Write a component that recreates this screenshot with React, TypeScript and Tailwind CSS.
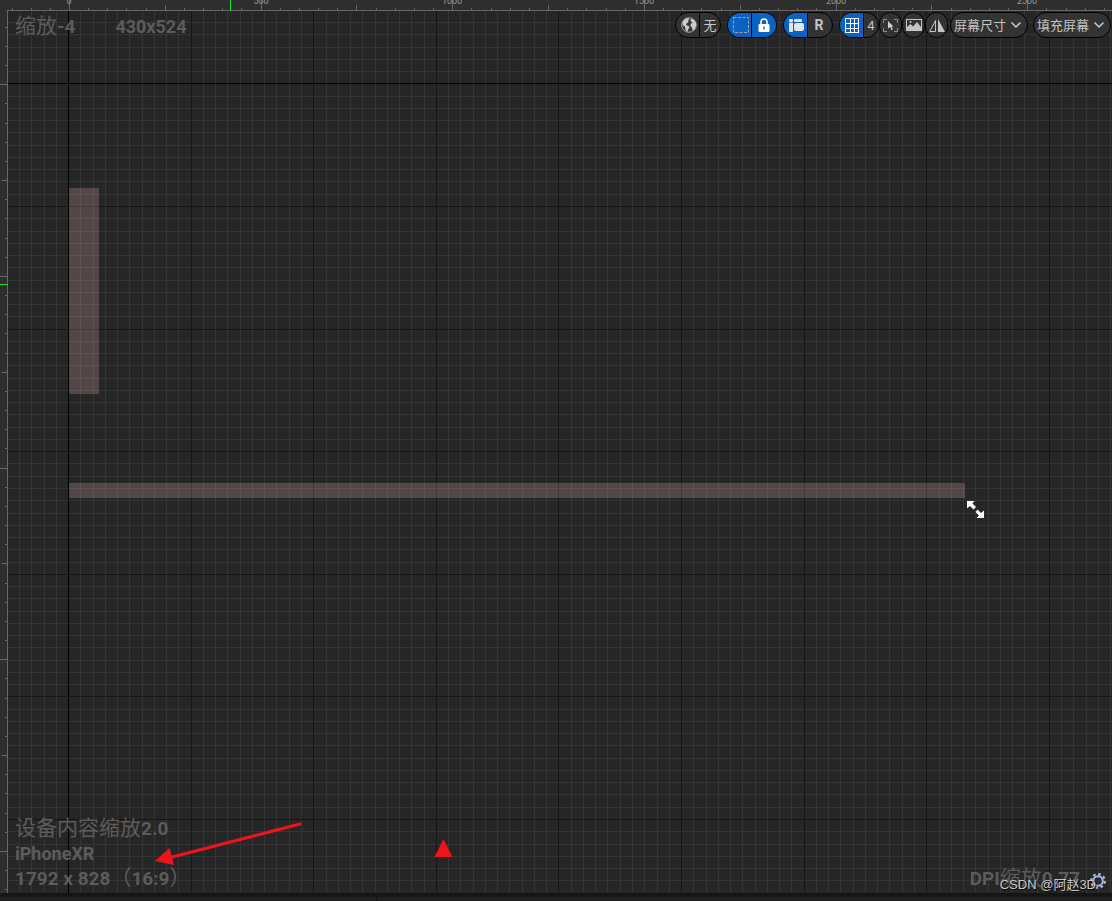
import type { ReactNode } from 'react';
import { ChevronDown } from 'lucide-react';

const UNIT = 0.3833; // pixels per slate unit
const GRID = 12.26;

const range = (from: number, to: number) => Array.from({ length: to - from + 1 }, (_, i) => from + i);

// Canvas coordinates start after the 8px left ruler and the 11px top ruler
const columns = range(-4, 200).map((i) => ({ i, pos: Math.round(68.05 + i * GRID) - 8 }));
const rows = range(-5, 150).map((i) => ({ i, pos: Math.round(83.4 + i * GRID) - 11 }));

const lineColor = (i: number) => (i === 0 ? '#000000' : i % 10 === 0 ? '#161616' : '#353535');
const byWeight = (a: { i: number }, b: { i: number }) => Number(a.i % 10 === 0) - Number(b.i % 10 === 0);

const tickSize = (i: number, full: number) => (i % 10 === 0 ? full : i % 5 === 0 ? 5 : 2);

function TopRuler() {
  return (
    <svg className="block h-[11px] w-full shrink-0 bg-[#2e2e2e]" shapeRendering="crispEdges">
      {range(-3, 130).map((i) => {
        const size = tickSize(i, 10);
        return <rect key={i} x={Math.round(69 + i * 50 * UNIT)} y={10 - size} width="1" height={size} fill="#686868" />;
      })}
      <rect x="7" y="10" width="100%" height="1" fill="#686868" />
      {range(0, 12).map((i) => (
        <text
          key={i}
          x={Math.round(69 + i * 500 * UNIT)}
          y="4"
          textAnchor="middle"
          className="fill-[#999999] font-['Roboto',sans-serif] text-[9px]"
        >
          {i * 500}
        </text>
      ))}
      <rect x="230" y="0" width="1" height="11" fill="#19e619" />
    </svg>
  );
}

function LeftRuler() {
  return (
    <div className="relative w-2 shrink-0 bg-[#2e2e2e]">
      <svg className="absolute inset-0 h-full w-full" shapeRendering="crispEdges">
        {range(-3, 90).map((i) => {
          const size = tickSize(i, 7);
          return <rect key={i} x={7 - size} y={Math.round(73.3 + i * 50 * UNIT)} width={size} height="1" fill="#686868" />;
        })}
        <rect x="7" y="0" width="1" height="100%" fill="#686868" />
        <rect x="0" y="273" width="8" height="1" fill="#19e619" />
      </svg>
    </div>
  );
}

function DesignCanvas() {
  return (
    <svg className="absolute inset-0 h-full w-full">
      <g shapeRendering="crispEdges">
        {[...columns.map((c) => ({ ...c, vertical: true })), ...rows.map((r) => ({ ...r, vertical: false }))]
          .sort(byWeight)
          .map(({ i, pos, vertical }) => (
            <rect
              key={`${vertical ? 'v' : 'h'}${i}`}
              x={vertical ? pos : 0}
              y={vertical ? 0 : pos}
              width={vertical ? 1 : '100%'}
              height={vertical ? '100%' : 1}
              fill={lineColor(i)}
            />
          ))}
        <rect x="61" y="177" width="30" height="206" fill="#f8c2c2" fillOpacity="0.21" />
        <rect x="61" y="472" width="896" height="15" fill="#f8c2c2" fillOpacity="0.21" />
      </g>

      {/* resize cursor */}
      <g transform="translate(959 490)" fill="#ffffff">
        <path d="M0 0h7.500L5.500 2.500 9 6 6.500 8.500 3 5 0 7.500z" />
        <path d="M17 17H9.500l2.500-2.500-3.500-3.500 2-2.500 3.500 3.500L17 9.500z" />
      </g>

      <path d="M292 813 164 846" stroke="#ed141c" strokeWidth="3" strokeLinecap="round" />
      <path d="m147 850 14.500-13 4.500 17z" fill="#ed141c" />
      <path d="m435.500 828 9 18h-18z" fill="#ed141c" />
    </svg>
  );
}

function Group({ children }: { children: ReactNode }) {
  return (
    <div className="flex h-[26px] divide-x divide-black overflow-hidden rounded-full border border-black bg-[#333333]">
      {children}
    </div>
  );
}

function ToolButton({ label, active, narrow, children }: { label: string; active?: boolean; narrow?: boolean; children: ReactNode }) {
  return (
    <button
      type="button"
      aria-label={label}
      className={`flex items-center justify-center ${narrow ? 'w-[14px]' : 'w-6'} ${active ? 'bg-[#0a62c2]' : ''}`}
    >
      {children}
    </button>
  );
}

function RoundButton({ label, children }: { label: string; children: ReactNode }) {
  return (
    <button
      type="button"
      aria-label={label}
      className="flex h-[26px] w-[23px] items-center justify-center rounded-full border border-black bg-[#333333]"
    >
      {children}
    </button>
  );
}

function Dropdown({ label, value }: { label: string; value: string }) {
  return (
    <div className="relative">
      <select
        aria-label={label}
        defaultValue={value}
        className="block h-[26px] w-[78px] appearance-none rounded-full border border-black bg-[#333333] pb-1 pl-[3px] text-[13px] text-[#c4c4c4]"
      >
        <option>{value}</option>
      </select>
      <ChevronDown className="pointer-events-none absolute top-[5px] right-1 size-4 text-[#c4c4c4]" strokeWidth={2.5} />
    </div>
  );
}

function Toolbar() {
  return (
    <div className="absolute top-px right-px flex items-center gap-[6px] font-['Roboto','Noto_Sans_CJK_SC',sans-serif] text-[13px] font-normal text-[#c4c4c4]">
      <Group>
        <ToolButton label="本地化">
          <svg viewBox="0 0 16 16" className="ml-[2px] size-4">
            <circle cx="8" cy="8" r="7.300" fill="#3a3a3a" stroke="#a0a0a0" />
            <path
              d="M1.500 5 4 2l3-1 1.500 1.500-1.500 1L7.500 5 5.500 6.500 5 8l2.500 1 1 1.500L7 12.500 6.500 15 4.500 13 4 9.500 1.500 8zM10 1.500l3 1.500 2 3v3l-1.500 3.500-2 1-.500-3-1.500-1.500.500-2.500 2-.500L10.500 5 9.500 3.500z"
              fill="#cccccc"
            />
          </svg>
        </ToolButton>
        <button type="button" className="w-5 pb-[2px]">无</button>
      </Group>
      <Group>
        <ToolButton label="显示轮廓" active>
          <svg viewBox="0 0 16 16" className="ml-[2px] size-4">
            <rect x="0.500" y="0.500" width="15" height="15" fill="none" stroke="#a4a09c" strokeDasharray="3 1.500" />
          </svg>
        </ToolButton>
        <ToolButton label="遵循锁定" active>
          <svg viewBox="0 0 12 14" className="h-[14px] w-3">
            <path d="M3 7V4a3 3 0 0 1 6 0v3" fill="none" stroke="#ffffff" strokeWidth="1.600" />
            <rect x="0.500" y="6" width="11" height="8" rx="1" fill="#ffffff" />
            <path d="M6 8.500v3" stroke="#0a62c2" strokeWidth="1.400" />
          </svg>
        </ToolButton>
      </Group>
      <Group>
        <ToolButton label="布局变换" active>
          <svg viewBox="0 0 15 13" className="ml-[2px] h-[13px] w-[15px]" fill="#e4e4e4">
            <rect x="0" y="0" width="4" height="3" rx="1" />
            <rect x="0" y="3.500" width="4" height="9.500" rx="1" />
            <rect x="5" y="0" width="8" height="3" rx="1" />
            <rect x="5" y="4" width="10" height="8" rx="2" />
          </svg>
        </ToolButton>
        <button type="button" className="w-6 pr-[2px] text-sm font-bold">R</button>
      </Group>
      <div className="flex">
        <Group>
          <ToolButton label="网格对齐" active>
            <svg viewBox="0 0 14 15" className="h-[15px] w-[14px]" fill="none" stroke="#ffffff" shapeRendering="crispEdges">
              <path d="M.5.500h13v14H.5zM5 0v15M9 0v15M0 5h14M0 10h14" />
            </svg>
          </ToolButton>
          <ToolButton label="网格大小" narrow>4</ToolButton>
        </Group>
        <RoundButton label="缩放到适合">
          <svg viewBox="0 0 15 13" className="h-[13px] w-[15px] shrink-0">
            <path d="M.5 4V.5H4M11 .5h3.500V4M.5 9v3.500H4M11 12.500h3.500V9" fill="none" stroke="#8c8c8c" />
            <path d="m5 2 5.500 5.500H8.500l1.500 3-1.500.500-1.300-3L5 9.500z" fill="#d0d0d0" />
          </svg>
        </RoundButton>
        <RoundButton label="预览背景">
          <svg viewBox="0 0 16 12" className="h-3 w-4 shrink-0">
            <rect x="0.500" y="0.500" width="15" height="11" fill="none" stroke="#c4c4c4" />
            <path d="M1 11V8l3.500-3L7 7.500 11 3l4 5v3z" fill="#c4c4c4" />
            <circle cx="4.500" cy="3" r="1" fill="#c4c4c4" />
          </svg>
        </RoundButton>
        <RoundButton label="翻转预览">
          <svg viewBox="0 0 16 13" className="h-[13px] w-4 shrink-0">
            <path d="M6.500 1.500v11H.8z" fill="none" stroke="#c4c4c4" />
            <path d="M9 0v13h7z" fill="#c4c4c4" />
          </svg>
        </RoundButton>
        <div className="ml-[2px] flex gap-[5px]">
          <Dropdown label="屏幕尺寸" value="屏幕尺寸" />
          <Dropdown label="填充屏幕" value="填充屏幕" />
        </div>
      </div>
    </div>
  );
}

function Cjk({ children }: { children: ReactNode }) {
  return <span className="font-['Noto_Sans_CJK_SC',sans-serif] text-[21px] leading-none font-normal">{children}</span>;
}

// Traditional forms keep full-width brackets centred in their box
function Bracket({ children }: { children: ReactNode }) {
  return (
    <span lang="zh-TW" className="font-['Noto_Sans_CJK_TC',sans-serif] text-[21px] leading-none font-normal">
      {children}
    </span>
  );
}

export default function App() {
  return (
    <div className="flex h-screen flex-col overflow-hidden bg-[#262626]">
      <TopRuler />
      <div className="flex min-h-0 flex-1">
        <LeftRuler />
        <main className="relative flex-1 overflow-hidden font-['Roboto',sans-serif] text-[19px] leading-[25px] font-bold text-[#5c5c5c]">
          <DesignCanvas />
          <div className="absolute top-[3px] left-[7px] flex gap-10">
            <p><Cjk>缩放</Cjk>-4</p>
            <p className="text-[18px]">430x524</p>
          </div>
          <Toolbar />
          <div className="absolute bottom-[2px] left-[7px]">
            <p><Cjk>设备内容缩放</Cjk>2.0</p>
            <p className="text-[18px]">iPhoneXR</p>
            <p>1792 x 828<Bracket>（</Bracket>16:9<Bracket>）</Bracket></p>
          </div>
          <p className="absolute right-8 bottom-[2px]">DPI<Cjk>缩放</Cjk>0.77</p>
          <button type="button" aria-label="设置" className="absolute right-[6px] bottom-1">
            <svg viewBox="0 0 16 16" className="size-4" fill="none" stroke="#a9b9ee">
              <circle cx="8" cy="8" r="4.800" strokeWidth="2" />
              <circle cx="8" cy="8" r="6.800" strokeWidth="2.200" strokeDasharray="2.670 2.670" />
            </svg>
          </button>
          <p className="absolute right-4 bottom-0 font-['Liberation_Sans','Noto_Sans_CJK_SC',sans-serif] text-[13px] leading-4 font-normal text-[#c8c8c8] [text-shadow:1px_1px_1px_#000000]">
            CSDN @阿赵3D
          </p>
        </main>
      </div>
      <footer className="flex h-2 shrink-0 gap-[2px] bg-[#151515] pt-1">
        <div className="w-[376px] bg-[#232121]" />
        <div className="flex-1 bg-[#232121]" />
      </footer>
    </div>
  );
}
